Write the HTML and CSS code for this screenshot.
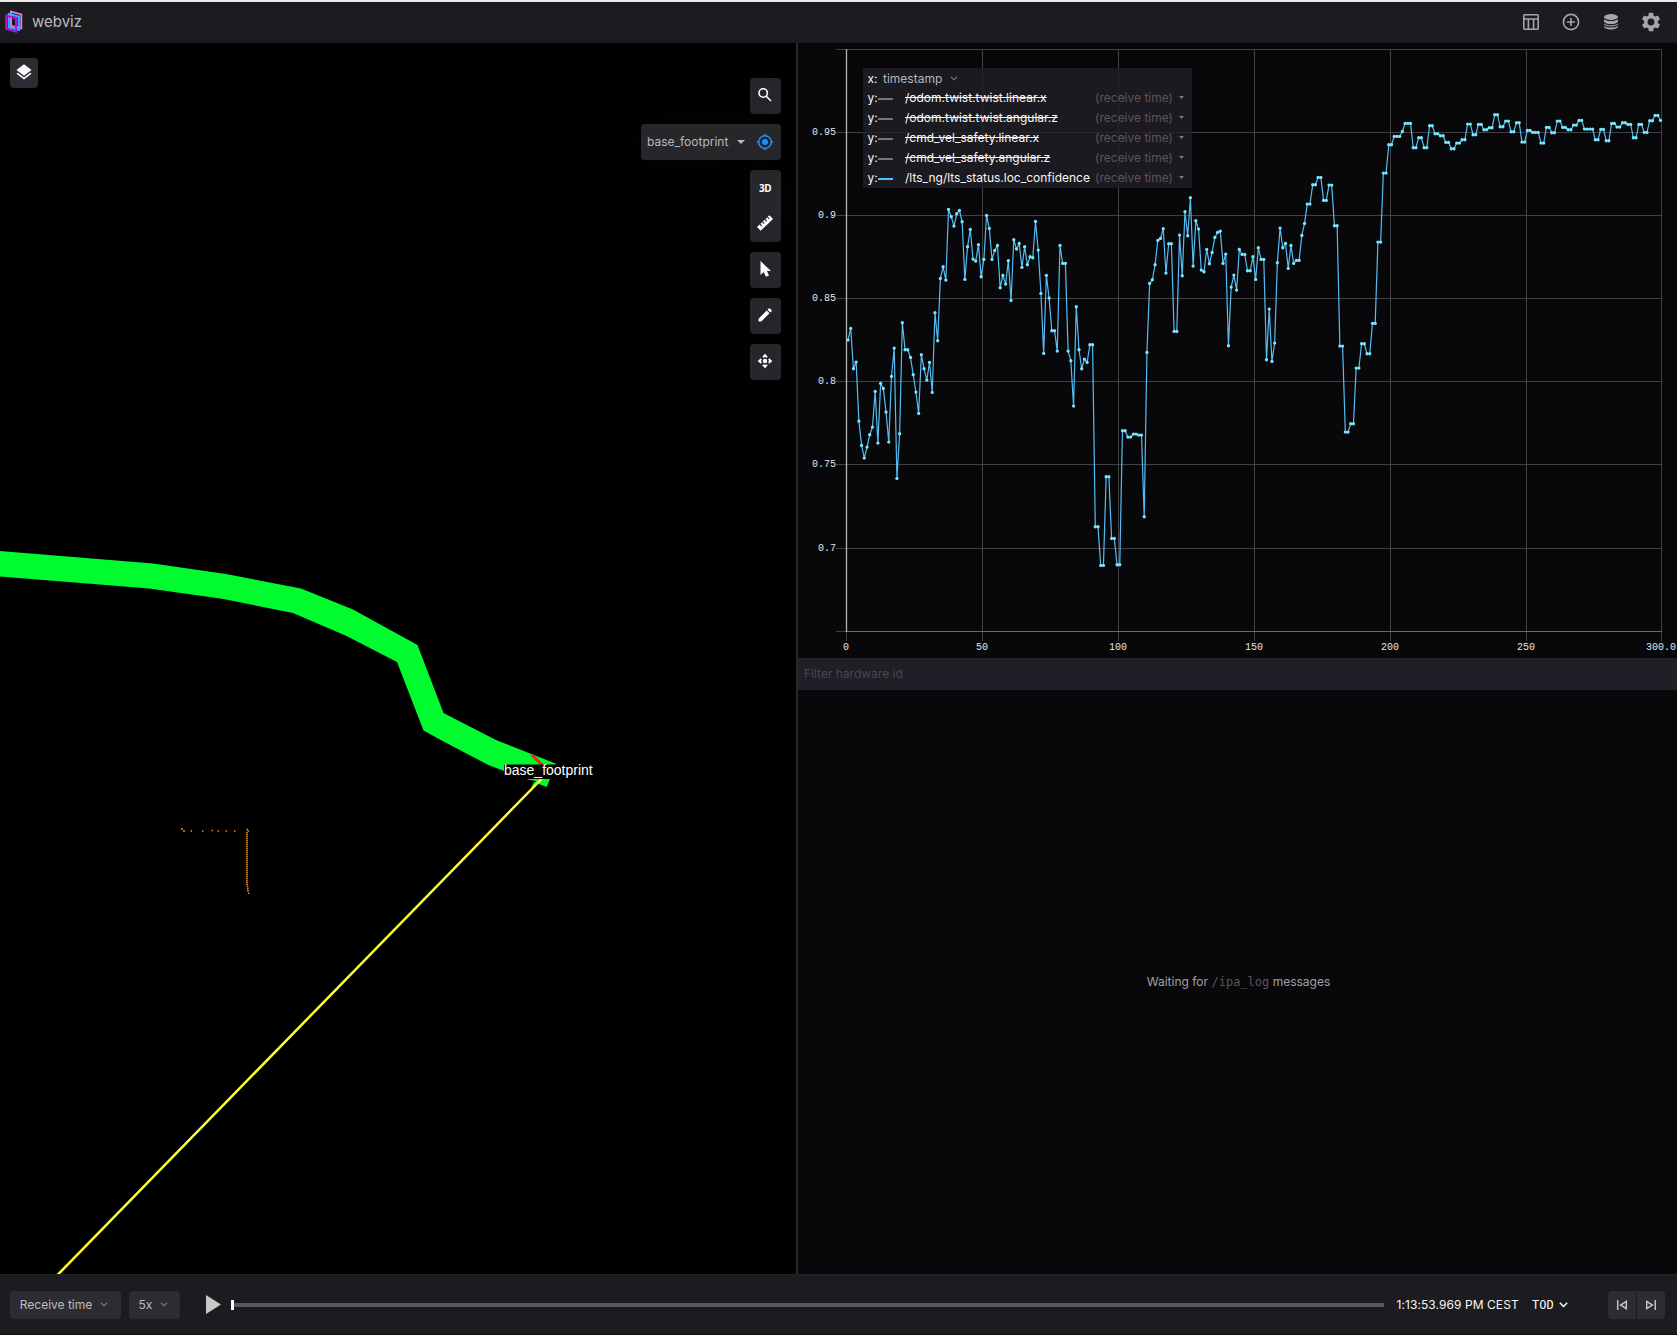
FILE: index.html
```html
<!DOCTYPE html>
<html lang="en">
<head>
<meta charset="utf-8">
<title>webviz</title>
<link rel="stylesheet" href="styles.css">
</head>
<body>
<div class="app">
  <header class="header">
    <svg class="logo" width="20" height="24" viewBox="0 0 20 24" fill="none" stroke-width="1.9">
      <path d="M7 1.600 17.300 4.400V18.400L7 16Z" stroke="#df7be8"/>
      <path d="M4.800 4 14.800 6.600V19.800L4.800 17.400Z" stroke="#1fb6ff" stroke-width="2.200"/>
      <path d="M2.200 5.600 12 8.200V21.600L2.200 18.800Z" stroke="#bb10d8" stroke-width="2"/>
    </svg>
    <h1 class="title">webviz</h1>
    <nav class="menu">
      <svg width="18" height="18" viewBox="0 0 18 18" fill="none" stroke="#a6a5a9" stroke-width="1.6"><rect x="1.8" y="1.8" width="14.4" height="14.4" rx="1"/><path d="M2 6H16M6.4 6V16M11.6 6V16"/></svg>
      <svg width="18" height="18" viewBox="0 0 18 18" fill="none" stroke="#a6a5a9" stroke-width="1.6"><circle cx="9" cy="9" r="7.6"/><path d="M9 5V13M5 9H13"/></svg>
      <svg width="18" height="18" viewBox="0 0 18 18" fill="#a6a5a9"><ellipse cx="9" cy="4" rx="7" ry="3"/><path d="M2 6.2C4 8.6 14 8.6 16 6.2V8.4C15 11.8 3 11.8 2 8.4ZM2 10.4C4 12.8 14 12.8 16 10.4V13.6C15 17.6 3 17.6 2 13.6Z"/><path d="M2 12.2C5 14.6 13 14.6 16 12.2" fill="none" stroke="#1c1b20" stroke-width="1.2"/></svg>
      <svg width="20" height="20" viewBox="1.5 1.5 21 21" fill="#a6a5a9"><path d="M19.14 12.94c.04-.3.06-.61.06-.94 0-.32-.02-.64-.07-.94l2.03-1.58a.49.49 0 0 0 .12-.61l-1.92-3.32a.49.49 0 0 0-.59-.22l-2.39.96a7 7 0 0 0-1.62-.94l-.36-2.54A.48.48 0 0 0 13.92 2.4h-3.84a.48.48 0 0 0-.47.41l-.36 2.54c-.59.24-1.13.57-1.62.94l-2.39-.96a.48.48 0 0 0-.59.22L2.74 8.87a.48.48 0 0 0 .12.61l2.03 1.58a6 6 0 0 0 0 1.88l-2.03 1.58a.49.49 0 0 0-.12.61l1.92 3.32c.12.22.37.29.59.22l2.39-.96c.5.38 1.03.7 1.62.94l.36 2.54c.05.24.24.41.48.41h3.84c.24 0 .44-.17.47-.41l.36-2.54a7 7 0 0 0 1.62-.94l2.39.96c.22.08.47 0 .59-.22l1.92-3.32a.47.47 0 0 0-.12-.61ZM12 15.6a3.6 3.6 0 1 1 0-7.2 3.6 3.6 0 0 1 0 7.2Z"/></svg>
    </nav>
  </header>

  <main class="panels">
    <section class="scene">
      <svg class="scene-canvas" width="797" height="1231" viewBox="0 43 797 1231">
        <path fill="#00fb2e" d="M0 551 153 563.5 226 574 301 588.5 353 609.5 417.500 645 443.500 713 496 740 556 763.700 546.700 787 488.300 765 440.700 740 423.500 730.500 397 662 346.500 636 293 613 223.500 599 149 588.500 0 576.500Z"/>
        <path fill="#000" d="M520 778 536 781 530 789H515Z"/>
        <path fill="#00fb2e" d="M534 782 531 788 540 783Z"/>
        <path d="M532 755 546 769" stroke="#f81c1c" stroke-width="3"/>
        <path d="M541.500 779 57.500 1275" stroke="#ffff2c" stroke-width="2.500"/>
        <path d="M181 829h2M183 831h2M190.500 831h1.500M202 831h1.500M211.500 830.500h1.500M217.500 831h1.500M225.500 831h1.500M234 831h1.500M246.500 829.500h1.500M247.500 831h1.500" stroke="#ea8428" stroke-width="1.700"/>
        <path d="M247 832V886" stroke="#ea8428" stroke-width="1.600" stroke-dasharray="1.500 .5"/>
        <path d="M247.500 886 248 892M248 893.300h2" stroke="#ea8428" stroke-width="1.600" stroke-dasharray="1.500 .5"/>
        <rect x="504" y="764.500" width="54" height="14.500" fill="#000"/>
        <text class="frame-label" x="504" y="775">base_footprint</text>
      </svg>
      <button class="tool layers" aria-label="Topics"><svg width="18" height="18" viewBox="0 0 18 18" fill="#fff"><path d="M9 1.300 16.500 7 9 12.700 1.500 7Z"/><path d="M1.500 10.700 9 16.400 16.500 10.700 15.200 9.700 9 14.400 2.800 9.700Z"/></svg></button>
      <div class="tools">
        <button class="tool" aria-label="Search"><svg width="16" height="16" viewBox="0 0 16 16" fill="none" stroke="#fff" stroke-width="1.600"><circle cx="6.200" cy="6" r="4.200"/><path d="M9.300 9.200 14 14"/></svg></button>
        <div class="tool follow">
          <span>base_footprint</span>
          <svg width="8" height="4" viewBox="0 0 8 4"><path d="M0 0H8L4 4Z" fill="#b9b8bb"/></svg>
          <svg width="18" height="18" viewBox="0 0 18 18" fill="none" stroke="#248eff" stroke-width="1.500"><circle cx="9" cy="9" r="6.300"/><circle cx="9" cy="9" r="3" fill="#248eff" stroke="none"/><path d="M9 .8V3M9 15V17.200M.8 9H3M15 9H17.200"/></svg>
        </div>
        <div class="tool double">
          <b>3D</b>
          <svg width="18" height="18" viewBox="0 0 18 18"><path fill="#fff" d="M1 13 13.500 1.200 17 4.900 4.600 16.800Z"/><path d="M4 10.200l1.700 1.800M6.500 7.800l1.700 1.800M9 5.500l1.700 1.800M11.500 3.100l1.700 1.800" stroke="#27262b" stroke-width="1.100"/></svg>
        </div>
        <button class="tool" aria-label="Select"><svg width="16" height="18" viewBox="0 0 16 18"><path fill="#fff" d="M3.500 1V15L6.700 12.100 8.900 16.800 12 15.400 9.900 10.900H14Z"/></svg></button>
        <button class="tool" aria-label="Draw"><svg width="16" height="16" viewBox="0 0 16 16" fill="#fff"><path d="M1.500 11.700 9.700 3.500 12.500 6.300 4.300 14.500H1.500ZM10.500 2.700 11.700 1.500Q12.300 1 12.900 1.500L14.500 3.100Q15 3.700 14.500 4.300L13.300 5.500Z"/></svg></button>
        <button class="tool" aria-label="Move"><svg width="16" height="16" viewBox="0 0 16 16" fill="#fff"><circle cx="8" cy="8" r="2.200"/><path d="M8 .7 10.700 3.800 9.600 4.800 8 4 6.400 4.800 5.300 3.800ZM8 15.300 10.700 12.200 9.600 11.200 8 12 6.400 11.200 5.300 12.200ZM.7 8 3.800 5.300 4.800 6.400 4 8 4.800 9.600 3.800 10.700ZM15.300 8 12.200 5.300 11.200 6.400 12 8 11.200 9.600 12.200 10.700Z"/></svg></button>
      </div>
    </section>

    <div class="side">
      <section class="plot">
        <svg class="chart" width="879" height="615" viewBox="798 43 879 615">
          <g id="grid"></g>
          <polyline id="line"/>
          <g id="dots"></g>
        </svg>
        <div class="legend">
          <div class="row"><span class="axis">x:</span><span class="stamp">timestamp</span><svg class="chev" width="8" height="5" viewBox="0 0 8 5"><path d="M1 .8 4 3.800 7 .8"/></svg></div>
          <div class="row off"><span class="axis">y:</span><i></i><span class="path">/odom.twist.twist.linear.x</span><span class="recv">(receive time)</span><em></em></div>
          <div class="row off"><span class="axis">y:</span><i></i><span class="path">/odom.twist.twist.angular.z</span><span class="recv">(receive time)</span><em></em></div>
          <div class="row off"><span class="axis">y:</span><i></i><span class="path">/cmd_vel_safety.linear.x</span><span class="recv">(receive time)</span><em></em></div>
          <div class="row off"><span class="axis">y:</span><i></i><span class="path">/cmd_vel_safety.angular.z</span><span class="recv">(receive time)</span><em></em></div>
          <div class="row"><span class="axis">y:</span><i></i><span class="path">/lts_ng/lts_status.loc_confidence</span><span class="recv">(receive time)</span><em></em></div>
        </div>
      </section>
      <section class="diagnostics">
        <div class="filter">Filter hardware id</div>
        <div class="waiting"><span>Waiting for <code>/ipa_log</code> messages</span></div>
      </section>
    </div>
  </main>

  <footer class="playback">
    <button class="btn time-mode">Receive time<svg class="chev" width="8" height="5" viewBox="0 0 8 5"><path d="M1 .8 4 3.800 7 .8"/></svg></button>
    <button class="btn speed">5x<svg class="chev" width="8" height="5" viewBox="0 0 8 5"><path d="M1 .8 4 3.800 7 .8"/></svg></button>
    <svg class="play" width="15" height="19" viewBox="0 0 15 19"><path d="M0 0 15 9.500 0 19Z" fill="#c9c8c6"/></svg>
    <div class="track"><div class="thumb"></div></div>
    <span class="clock">1:13:53.969 PM CEST</span>
    <span class="tod">TOD</span>
    <svg class="tod-chev" width="9" height="6" viewBox="0 0 9 6"><path d="M.8 .8 4.500 4.500 8.200 .8" fill="none" stroke="#fff" stroke-width="1.500"/></svg>
    <div class="steps">
      <button class="btn" aria-label="Previous"><svg width="12" height="12" viewBox="0 0 12 12" fill="none" stroke="#c2c1c4" stroke-width="1.500"><path d="M1.700 1V11M10.300 2.300V9.700L4.600 6Z"/></svg></button>
      <button class="btn" aria-label="Next"><svg width="12" height="12" viewBox="0 0 12 12" fill="none" stroke="#c2c1c4" stroke-width="1.500"><path d="M10.300 1V11M1.700 2.300V9.700L7.400 6Z"/></svg></button>
    </div>
  </footer>
</div>
<script src="chart.js"></script>
</body>
</html>
```
FILE: styles.css
```css
* { box-sizing: border-box; }
body { margin: 0; background: #000; font-family: Inter, sans-serif; font-size: 12px; color: #f7f7f3; }
button { border: 0; font: inherit; padding: 0; }
svg { display: block; flex: none; }
.app { display: flex; flex-direction: column; width: 1677px; height: 1335px; overflow: hidden; }

.header { display: flex; align-items: center; flex: none; height: 43px; padding: 0 16px 0 4px; background: #1c1b20; border-top: 2px solid #e9e9ea; border-bottom: 1px solid #18171b; }
.title { margin: 0 0 1px 8px; font-size: 15px; font-weight: 400; color: #bcbbbe; }
.menu { display: flex; align-items: center; gap: 22px; margin-left: auto; }
.menu svg:not(:last-child) { margin-right: -1px; margin-left: 1px; }

.panels { display: flex; flex: 1; min-height: 0; }
.scene { position: relative; width: 796px; background: #000; overflow: hidden; }
.frame-label { font: 14px "Liberation Sans", sans-serif; fill: #fff; }
.tool { display: flex; align-items: center; justify-content: center; width: 31px; height: 36px; padding: 0 1px 2px 0; border-radius: 4px; background: #27262b; color: #fff; box-shadow: 0 0 30px rgba(16, 16, 20, .4); }
.layers { position: absolute; left: 10px; top: 15px; width: 28px; height: 30px; padding: 0 0 2px; background: #2d2c33; }
.tools { position: absolute; top: 35px; right: 15px; display: flex; flex-direction: column; align-items: flex-end; gap: 10px; }
.follow { width: 140px; justify-content: flex-start; padding: 0 0 1px 6px; color: #b9b8bb; }
.follow span { width: 90px; }
.follow svg:last-child { margin-left: 11px; }
.double { flex-direction: column; height: 72px; justify-content: space-around; }
.double b { font: 700 10px/18px "Noto Sans", sans-serif; letter-spacing: -.4px; }

.side { display: flex; flex-direction: column; flex: 1; border-left: 2px solid #29282d; background: #08080a; }
.plot { position: relative; height: 617px; border-bottom: 2px solid #242329; }
.chart text { font: 10px "Liberation Mono", monospace; fill: #e6e6e4; }
.grid-line { stroke: #414143; }
.axis-line { stroke: #6a6a6c; }
.origin-line { stroke: #b2b2b3; stroke-width: 1.300; }
#line { fill: none; stroke: #55bdf4; stroke-width: 1.200; }
#dots { fill: #78e6fb; }
.legend { position: absolute; left: 65px; top: 25px; width: 329px; height: 120px; padding: 0 8px 0 5px; background: rgba(32, 31, 37, .8); }
.row { display: flex; align-items: center; height: 20px; padding-bottom: 1px; }
.row:first-child { padding-bottom: 0; }
.row i { width: 15px; height: 2px; background: #4fc1ff; transform: translateY(1px); }
.row.off i { background: #777673; }
.row.off .path { text-decoration: line-through; }
.axis { width: 10px; margin-left: -.5px; }
.stamp { margin: 0 8px 0 5.5px; color: #b8b8b8; }
.path { margin-left: 12.500px; }
.recv { margin-left: auto; color: #58575b; }
.row em { width: 5px; height: 3px; margin-left: 6px; background: #76757a; clip-path: polygon(0 0, 100% 0, 50% 100%); }
.chev path { fill: none; stroke: #85848a; stroke-width: 1.100; }

.diagnostics { display: flex; flex-direction: column; flex: 1; }
.filter { height: 30px; padding-left: 6px; line-height: 28px; background: #201f27; color: #48474c; }
.waiting { display: flex; flex: 1; align-items: center; justify-content: center; padding: 0 0 2px 2px; color: #a0a0a2; }
.waiting code { font: 12px "DejaVu Sans Mono", monospace; color: #57575c; }

.playback { display: flex; align-items: center; flex: none; height: 61px; padding: 0 12px 0 10px; background: #1c1b20; border-top: 1px solid #232227; border-bottom: 1px solid #0e0e11; }
.btn { display: flex; align-items: center; justify-content: center; height: 28px; border-radius: 4px; background: #2d2c33; color: #bdbcbf; }
.time-mode { width: 111px; gap: 8px; padding-right: 3px; }
.speed { width: 51px; gap: 8px; margin-left: 8px; padding-right: 2px; }
.play { margin: 0 10px 0 26px; }
.track { display: flex; align-items: center; width: 1153px; height: 4px; background: #59595d; }
.thumb { width: 3px; height: 10px; background: #fff; }
.clock { width: 124px; margin-left: 12.500px; white-space: nowrap; letter-spacing: .07px; }
.tod { width: 22px; margin-left: 11.500px; font: 12px "DejaVu Sans Mono", monospace; }
.tod-chev { margin-left: 5px; }
.steps { display: flex; gap: 1px; margin-left: auto; }
.steps .btn { width: 28px; }
.steps .btn:first-child { border-radius: 4px 0 0 4px; }
.steps .btn:last-child { border-radius: 0 4px 4px 0; }
```
FILE: chart.js
```js
// Confidence samples, one per second, in thirds of a pixel below y = 180.
const early = [480,445,566,546,723,796,834,801,764,741,634,789,610,625,696,786,589,504,895,761,
428,509,509,532,584,636,700,524,566,600,547,637,398,482,295,260,300,88,110,138,
101,91,125,298,200,148,237,243,194,290,238,106,145,238,211,196,323,286,312,242,
361,179,207,190,262,200,254,230,233,124,210,340,520,286,354,452,452,513,196,250,
250,513,542,678,380,509,566,537,547,494,494,1040,1040,1156,1156,890,890,1075,1075,1154,
1154,752,752,771,771,762,762,765,765,1010,517,310,299,254,181,175,146,279,191,191,
454,454,165,287,95,167,53,258,122,147,270,275,208,251,217,172,157,153,250,222,
497,321,285,330,208,223,223,272,272,230,298,203,238,238,539,387,544,489,248,144,
203,190,265,196,250,241,241,166,130,72,72,14,14,-8,-8,61,61,15,15,137,
137,498,498,756,756,731,731,564,564,491,491,521,521,430,430,186,186];
// [level, repeat count] below y = 90 for the plateau.
const late = [[249,2],[164,2],[139,3],[124,1],[100,3],[173,2],[143,2],[173,2],[107,2],[131,2],[137,2],
[157,2],[176,2],[159,2],[149,2],[102,2],[134,2],[103,2],[119,2],[113,2],[74,2],[110,2],[93,2],[125,2],
[98,2],[156,2],[121,2],[127,3],[159,2],[112,2],[128,2],[93,2],[112,2],[119,2],[105,2],[91,2],[117,4],
[149,2],[118,2],[152,2],[100,2],[111,2],[98,2],[103,2],[143,2],[103,2],[127,2],[92,2],[76,2],[91,1]];
const ys = early.map(v => 180 + v / 3);
for (const [v, n] of late) for (let k = 0; k < n; k++) ys.push(90 + v / 3);
const points = ys.map((y, i) => [848 + i * 2.7175, y + 0.1]);

document.getElementById('line').setAttribute('points', points.map(p => p.join()).join(' '));
document.getElementById('dots').innerHTML =
  points.map(([x, y]) => `<circle cx="${x.toFixed(2)}" cy="${y.toFixed(2)}" r="1.65"/>`).join('');

let grid = '';
const line = (x1, y1, x2, y2, c) => { grid += `<line class="${c}" x1="${x1}" y1="${y1}" x2="${x2}" y2="${y2}"/>`; };
[[49.5], [132.5, '0.95'], [215.5, '0.9'], [298.5, '0.85'], [381.5, '0.8'], [464.5, '0.75'], [548.5, '0.7'], [631.5]]
  .forEach(([y, label]) => {
    line(836, y, 1662, y, 'grid-line');
    if (label) grid += `<text x="836" y="${y + 2.5}" text-anchor="end">${label}</text>`;
  });
[[846.5, '0'], [982.5, '50'], [1118.5, '100'], [1254.5, '150'], [1390.5, '200'], [1526.5, '250'], [1661.5, '300.0']]
  .forEach(([x, label]) => {
    line(x, 49, x, 641, 'grid-line');
    grid += `<text x="${x - 0.5}" y="650" text-anchor="middle">${label}</text>`;
  });
line(846, 631.5, 1662, 631.5, 'axis-line');
line(846.5, 49, 846.5, 632, 'origin-line');
document.getElementById('grid').innerHTML = grid;
```
